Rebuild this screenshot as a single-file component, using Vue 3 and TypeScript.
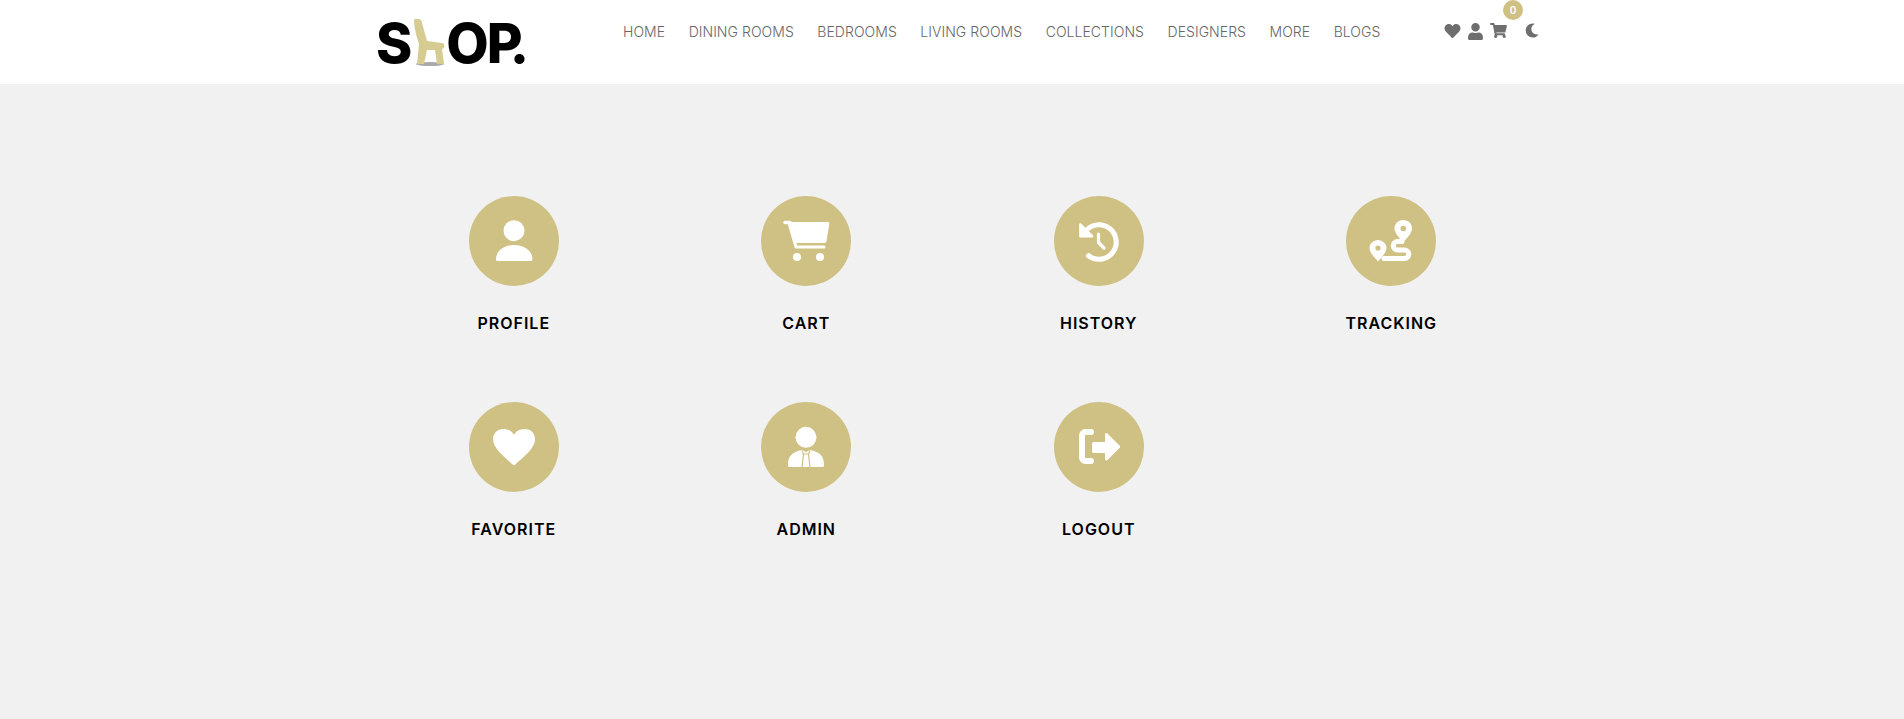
<template>
  <div class="page">
    <header class="header">
      <div class="bar">
        <div class="logo">
          <span>S</span>
          <svg class="chair" viewBox="0 0 34 48" width="34" height="48">
            <ellipse cx="18" cy="46" rx="14" ry="2" fill="#a9a9a9" />
            <path d="M2 2 C2 1 3 1 4 1 L7 1 C8 1 9 2 9.500 3 L15 23 L30 25 C33 25.500 33.500 30 30 31 L32 46 L25 46 L23 32 L15 32 L12 46 L5 46 L7 26 C5 20 2 10 2 2 Z" fill="#d6cb91" />
          </svg>
          <span class="logo-o">O</span><span class="logo-p">P.</span>
        </div>
        <nav class="nav">
          <a v-for="link in links" :key="link">{{ link }}</a>
        </nav>
        <div class="tools">
          <svg class="heart" viewBox="0 0 512 512"><path d="M462.3 62.6C407.5 15.9 326 24.3 275.7 76.2L256 96.5l-19.7-20.3C186.1 24.3 104.5 15.9 49.7 62.6c-62.8 53.6-66.1 149.8-9.9 207.9l193.5 199.8c12.5 12.9 32.8 12.9 45.3 0l193.5-199.8c56.3-58.1 53-154.3-9.8-207.9z" /></svg>
          <svg class="user" viewBox="0 0 448 512"><path d="M224 256c70.7 0 128-57.3 128-128S294.7 0 224 0 96 57.3 96 128s57.3 128 128 128zm89.6 32h-16.7c-22.2 10.2-46.9 16-72.9 16s-50.6-5.8-72.9-16h-16.7C60.2 288 0 348.2 0 422.4V464c0 26.5 21.5 48 48 48h352c26.5 0 48-21.5 48-48v-41.6c0-74.2-60.2-134.4-134.4-134.4z" /></svg>
          <div class="cart">
            <svg viewBox="0 0 576 512"><path d="M528.12 301.319l47.273-208C578.806 78.301 567.391 64 551.99 64H159.208l-9.166-44.81C147.758 8.021 137.93 0 126.529 0H24C10.745 0 0 10.745 0 24v16c0 13.255 10.745 24 24 24h69.883l70.248 343.435C147.325 417.1 136 435.222 136 456c0 30.928 25.072 56 56 56s56-25.072 56-56c0-15.674-6.447-29.835-16.824-40h209.647C430.447 426.165 424 440.326 424 456c0 30.928 25.072 56 56 56s56-25.072 56-56c0-22.172-12.888-41.332-31.579-50.405l5.517-24.276c3.413-15.018-8.002-29.319-23.403-29.319H218.117l-6.545-32h293.145c11.206 0 20.92-7.754 23.403-18.681z" /></svg>
            <span class="badge">0</span>
          </div>
          <svg class="moon" viewBox="0 0 512 512"><path d="M283.211 512c78.962 0 151.079-35.925 198.857-94.792 7.068-8.708-.639-21.43-11.562-19.35-124.203 23.654-238.262-71.576-238.262-196.954 0-72.222 38.662-138.635 101.498-174.394 9.686-5.512 7.25-20.197-3.756-22.23A258.156 258.156 0 0 0 283.211 0c-141.309 0-256 114.511-256 256 0 141.309 114.511 256 256 256z" /></svg>
        </div>
      </div>
    </header>

    <main class="main">
      <div class="grid">
        <a class="item">
          <div class="circle">
            <svg viewBox="0 0 90 90">
              <circle cx="45" cy="34.7" r="10.5" />
              <path d="M27 63 C27 55 35 49 45 49 C55 49 63.5 55 63.5 63 C63.5 64.5 62.5 65 61 65 H29 C27.5 65 27 64.5 27 63 Z" />
            </svg>
          </div>
          <span class="label">{{ items[0] }}</span>
        </a>
        <a class="item">
          <div class="circle">
            <svg viewBox="0 0 90 90">
              <path d="M24 26.5 H29" stroke="#fff" stroke-width="3.4" stroke-linecap="round" fill="none" />
              <path d="M27.5 26 H67 C68 26 68.5 27 68.3 28 L65.500 45 C65.300 46.500 64.500 47 63 47 H33 Z" />
              <path d="M28 27 L35 51 H63" stroke="#fff" stroke-width="3" fill="none" stroke-linejoin="round" stroke-linecap="round" />
              <circle cx="36" cy="61" r="4" />
              <circle cx="59" cy="61" r="4" />
            </svg>
          </div>
          <span class="label">{{ items[1] }}</span>
        </a>
        <a class="item">
          <div class="circle">
            <svg viewBox="0 0 90 90">
              <g transform="translate(24.500 25.500) scale(0.08)">
                <path d="M504 255.531c.253 136.64-111.18 248.372-247.82 248.468-59.015.042-113.223-20.53-155.822-54.911-11.077-8.94-11.905-25.541-1.839-35.607l11.267-11.267c8.609-8.609 22.353-9.551 31.891-1.984C173.062 425.135 212.781 440 256 440c101.705 0 184-82.311 184-184 0-101.705-82.311-184-184-184-48.814 0-93.149 18.969-126.068 49.932l50.754 50.754c10.08 10.08 2.941 27.314-11.313 27.314H24c-8.837 0-16-7.163-16-16V38.627c0-14.254 17.234-21.393 27.314-11.314l49.372 49.372C129.209 34.136 189.552 8 256 8c136.81 0 247.747 110.78 248 247.531z" />
              </g>
              <path d="M44.500 38 V46.500 L50 52" stroke="#fff" stroke-width="3.200" fill="none" stroke-linecap="round" />
            </svg>
          </div>
          <span class="label">{{ items[2] }}</span>
        </a>
        <a class="item">
          <div class="circle">
            <svg viewBox="0 0 90 90">
              <path fill-rule="evenodd" d="M57.3 24 C62.500 24 66 28 66 32.500 C66 37 60.500 43 57.3 46 C54 43 48.500 37 48.500 32.500 C48.500 28 52.100 24 57.3 24 Z M57.3 29.700 a2.800 2.800 0 1 0 0 5.600 a2.800 2.800 0 1 0 0 -5.600 Z" />
              <path fill-rule="evenodd" d="M32 44 C36.500 44 40.500 47.700 40.500 52 C40.500 56.500 35 62 32 65.500 C29 62 23.500 56.500 23.500 52 C23.500 47.700 27.500 44 32 44 Z M32 49.500 a2.600 2.600 0 1 0 0 5.200 a2.600 2.600 0 1 0 0 -5.200 Z" />
              <path d="M56 45.500 H51.500 a4 4 0 0 0 0 8.500 H58.500 a4.300 4.300 0 0 1 0 8.600 H38" stroke="#fff" stroke-width="5" fill="none" stroke-linecap="round" />
            </svg>
          </div>
          <span class="label">{{ items[3] }}</span>
        </a>
        <a class="item">
          <div class="circle">
            <svg viewBox="0 0 90 90">
              <path d="M24 37 C24 31 29 27 34 27 C39 27 43 29 45 33 C47 29 51 27 56 27 C61.500 27 66 31 66 37 C66 47 53 56 47 62 C46 63.300 44 63.300 43 62 C37 56 24 47 24 37 Z" />
            </svg>
          </div>
          <span class="label">{{ items[4] }}</span>
        </a>
        <a class="item">
          <div class="circle">
            <svg viewBox="0 0 90 90">
              <circle cx="45" cy="35.300" r="10.500" />
              <path d="M27 63 C27 54 31 50 41 48 L45 50 L49 48 C59 50 63 54 63 63 C63 64.500 62.500 65 61 65 H29 C27.500 65 27 64.500 27 63 Z" />
              <path d="M41 48.500 L42.500 52 L41 65 M49 48.500 L47.500 52 L49 65 M42.500 52 H47.500" stroke="#cfc184" stroke-width="1.200" fill="none" />
            </svg>
          </div>
          <span class="label">{{ items[5] }}</span>
        </a>
        <a class="item">
          <div class="circle">
            <svg viewBox="0 0 90 90">
              <path d="M37 30 H31.500 C29.500 30 28 31.500 28 33.500 V55.500 C28 57.500 29.500 59 31.500 59 H37" stroke="#fff" stroke-width="6" fill="none" stroke-linecap="round" />
              <path d="M51 32.500 C51 31 52.500 30.500 53.500 31.500 L65.500 43.500 C66.300 44.300 66.300 45.300 65.500 46 L53.500 58 C52.500 59 51 58.500 51 57 V51 H40 C38.500 51 38 50.300 38 49 V42 C38 40.700 38.500 40 40 40 H51 Z" />
            </svg>
          </div>
          <span class="label">{{ items[6] }}</span>
        </a>
      </div>
    </main>
  </div>
</template>

<script setup lang="ts">
const links = ['HOME', 'DINING ROOMS', 'BEDROOMS', 'LIVING ROOMS', 'COLLECTIONS', 'DESIGNERS', 'MORE', 'BLOGS']
const items = ['PROFILE', 'CART', 'HISTORY', 'TRACKING', 'FAVORITE', 'ADMIN', 'LOGOUT']
</script>

<style>
html,
body {
  margin: 0;
  background: #f1f1f2;
}
</style>

<style scoped>
.page {
  min-height: 719px;
  background: #f1f1f2;
  font-family: "Inter", "Liberation Sans", sans-serif;
  overflow: hidden;
}
.header {
  height: 84px;
  background: #fff;
}
.bar {
  width: 1170px;
  height: 84px;
  margin: 0 auto;
  padding-left: 9px;
  box-sizing: border-box;
  display: flex;
}
.logo {
  width: 247px;
  display: flex;
  align-items: flex-start;
  padding-top: 13px;
  box-sizing: border-box;
  font-size: 55px;
  line-height: 60px;
  font-weight: 800;
  color: #000;
}
.chair {
  margin: 5px 0 0 0;
  flex: none;
}
.logo-o {
  letter-spacing: -2px;
}
.logo-p {
  letter-spacing: -11px;
}
.nav {
  display: flex;
  gap: 23.5px;
  padding-top: 23px;
  height: 18px;
  font-family: "Inter", sans-serif;
  font-size: 14px;
  font-weight: 300;
  letter-spacing: 0.05px;
  line-height: 18px;
  color: #666;
  white-space: nowrap;
}
.tools {
  display: flex;
  align-items: flex-start;
  margin-left: auto;
  margin-right: -2px;
  padding-top: 23px;
  fill: #6e6e6e;
}
.tools svg {
  display: block;
}
.heart {
  width: 17px;
  height: 16px;
}
.user {
  width: 15px;
  height: 17px;
  margin-left: 7px;
}
.cart {
  position: relative;
  width: 17px;
  height: 15px;
  margin-left: 7px;
}
.cart svg {
  width: 17px;
  height: 15px;
}
.badge {
  position: absolute;
  top: -23px;
  left: 13px;
  width: 20px;
  height: 20px;
  border-radius: 50%;
  background: #cfc184;
  color: #fff;
  font-size: 10px;
  font-weight: 600;
  line-height: 20px;
  text-align: center;
}
.moon {
  width: 14px;
  height: 15px;
  margin-left: 18px;
}
.main {
  padding: 112px 0 0 1px;
}
.grid {
  width: 1170px;
  margin: 0 auto;
  display: grid;
  grid-template-columns: repeat(4, 1fr);
  row-gap: 69px;
}
.item {
  display: flex;
  flex-direction: column;
  align-items: center;
}
.circle {
  width: 90px;
  height: 90px;
  border-radius: 50%;
  background: #cfc184;
  fill: #fff;
}
.circle svg {
  display: block;
  width: 90px;
  height: 90px;
}
.label {
  margin-top: 27px;
  font-size: 16px;
  line-height: 20px;
  font-weight: 600;
  letter-spacing: 1px;
  color: #000;
}
</style>
